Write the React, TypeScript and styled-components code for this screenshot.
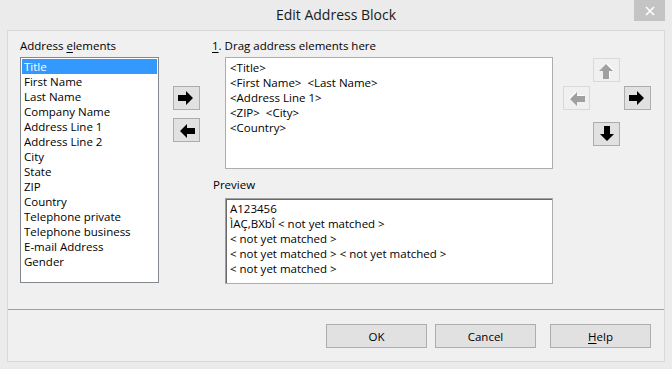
import React from 'react';
import styled, { createGlobalStyle } from 'styled-components';

const GlobalStyle = createGlobalStyle`
    html, body {
        margin: 0;
        padding: 0;
        background: #ebebeb;
    }
    * {
        box-sizing: border-box;
    }
`

const Window = styled.div`
    width: 672px;
    height: 369px;
    background: #ebebeb;
    display: flex;
    flex-direction: column;
    font-family: "Open Sans", "Noto Sans", sans-serif;
    font-size: 11.5px;
    color: #000;
`

const TitleBar = styled.div`
    height: 30px;
    display: grid;
    grid-template-columns: 1fr auto 1fr;
    align-items: start;
`

const Title = styled.div`
    grid-column: 2;
    font-size: 14px;
    line-height: 30px;
    color: #1a1a1a;
`

const CloseButton = styled.div`
    grid-column: 3;
    justify-self: end;
    margin-right: 7px;
    width: 31px;
    height: 21px;
    background: #c4c4c4;
    display: flex;
    align-items: center;
    justify-content: center;
`

const Client = styled.div`
    margin: 0 7px 7px 7px;
    flex: 1;
    border: 1px solid #d9d9d9;
    background: #f0f0f0;
    display: flex;
    flex-direction: column;
`

const Main = styled.div`
    height: 279px;
    border-bottom: 1px solid #a0a0a0;
    display: flex;
    padding: 7px 12px 0 12px;
`

const Column = styled.div<{ $width?: number }>`
    display: flex;
    flex-direction: column;
    width: ${p => (p.$width ? `${p.$width}px` : 'auto')};
`

const Label = styled.div<{ $indent?: number }>`
    height: 16px;
    line-height: 16px;
    margin-bottom: 3px;
    margin-left: ${p => p.$indent || 0}px;
    white-space: nowrap;
`

const Key = styled.span`
    text-decoration: underline;
    text-underline-offset: 2px;
`

const ListBox = styled.div`
    height: 226px;
    background: #fff;
    border: 1px solid #828790;
    padding: 1px;
`

const ListItem = styled.div<{ $selected?: boolean }>`
    height: 15px;
    line-height: 15px;
    padding-left: 2px;
    white-space: nowrap;
    background: ${p => (p.$selected ? '#3399ff' : 'transparent')};
    color: ${p => (p.$selected ? '#fff' : '#000')};
`

const MoveColumn = styled.div`
    display: flex;
    flex-direction: column;
    gap: 8px;
    margin: 48px 12px 0 14px;
`

const ArrowButton = styled.div<{ $disabled?: boolean }>`
    width: 27px;
    height: 24px;
    background: ${p => (p.$disabled ? '#f0f0f0' : '#e1e1e1')};
    border: 1px solid ${p => (p.$disabled ? '#d9d9d9' : '#adadad')};
    display: flex;
    align-items: center;
    justify-content: center;
`

const TextBox = styled.div<{ $height: number; $sunken?: boolean }>`
    margin-left: 13px;
    width: 328px;
    height: ${p => p.$height}px;
    background: #fff;
    border: 1px solid #abadb3;
    border-top-color: ${p => (p.$sunken ? '#a0a0a0' : '#abadb3')};
    border-left-color: ${p => (p.$sunken ? '#a0a0a0' : '#abadb3')};
    box-shadow: ${p => (p.$sunken ? 'inset 1px 1px 0 #696969' : 'none')};
    padding: 2px 4px;
`

const Line = styled.div`
    height: 15px;
    line-height: 15px;
    white-space: pre;
`

const SectionGap = styled.div`
    height: 8px;
`

const PreviewLabel = styled(Label)`
    margin-bottom: 5px;
    margin-left: 1px;
`

const Cluster = styled.div`
    display: grid;
    grid-template-columns: 27px 27px 27px;
    grid-template-rows: 24px 24px 36px;
    column-gap: 3px;
    row-gap: 4px;
    margin: 20px 0 0 10px;
    align-items: start;
`

const Cell = styled.div<{ $col: number; $row: number; $offset?: number }>`
    grid-column: ${p => p.$col};
    grid-row: ${p => p.$row};
    margin-top: ${p => p.$offset || 0}px;
    margin-left: ${p => (p.$col === 3 ? 1 : 0)}px;
`

const Footer = styled.div`
    flex: 1;
    display: flex;
    justify-content: flex-end;
    align-items: flex-start;
    padding: 14px 13px 0 0;
    gap: 8px;
`

const DialogButton = styled.div<{ $gapBefore?: number }>`
    width: 101px;
    height: 24px;
    background: #e1e1e1;
    border: 1px solid #adadad;
    display: flex;
    align-items: center;
    justify-content: center;
    margin-left: ${p => p.$gapBefore || 0}px;
`

type Dir = 'left' | 'right' | 'up' | 'down';

const arrowRotation: Record<Dir, number> = { right: 0, down: 90, left: 180, up: 270 };

const Arrow = ({ dir, disabled }: { dir: Dir; disabled?: boolean }) => (
    <svg width="17" height="15" viewBox="0 0 17 15" style={{ transform: `rotate(${arrowRotation[dir]}deg)` }}>
        {disabled && <polygon points="1,5 9,5 9,1 16,8 9,15 9,11 1,11" fill="#fff" />}
        <polygon points="0,4 8,4 8,0 15,7 8,14 8,10 0,10" fill={disabled ? '#a0a0a0' : '#000'} />
    </svg>
);

const elements = [
    'Title', 'First Name', 'Last Name', 'Company Name', 'Address Line 1', 'Address Line 2',
    'City', 'State', 'ZIP', 'Country', 'Telephone private', 'Telephone business',
    'E-mail Address', 'Gender',
];

const blockLines = ['<Title>', '<First Name>  <Last Name>', '<Address Line 1>', '<ZIP>  <City>', '<Country>'];

const previewLines = [
    'A123456',
    'ÌAÇ,BXbÎ < not yet matched >',
    '< not yet matched >',
    '< not yet matched > < not yet matched >',
    '< not yet matched >',
];

export default function App() {
    return (
        <>
            <GlobalStyle />
            <Window>
                <TitleBar>
                    <Title>Edit Address Block</Title>
                    <CloseButton>
                        <svg width="10" height="10" viewBox="0 0 10 10">
                            <path d="M1 1 L9 9 M9 1 L1 9" stroke="#fff" strokeWidth="1.6" />
                        </svg>
                    </CloseButton>
                </TitleBar>
                <Client>
                    <Main>
                        <Column $width={139}>
                            <Label>Address <Key>e</Key>lements</Label>
                            <ListBox>
                                {elements.map((e, i) => (
                                    <ListItem key={e} $selected={i === 0}>{e}</ListItem>
                                ))}
                            </ListBox>
                        </Column>
                        <MoveColumn>
                            <ArrowButton><Arrow dir="right" /></ArrowButton>
                            <ArrowButton><Arrow dir="left" /></ArrowButton>
                        </MoveColumn>
                        <Column>
                            <Label><Key>1</Key>. Drag address elements here</Label>
                            <TextBox $height={112}>
                                {blockLines.map((l, i) => <Line key={i}>{l}</Line>)}
                            </TextBox>
                            <SectionGap />
                            <PreviewLabel>Preview</PreviewLabel>
                            <TextBox $height={86} $sunken>
                                {previewLines.map((l, i) => <Line key={i}>{l}</Line>)}
                            </TextBox>
                        </Column>
                        <Cluster>
                            <Cell $col={2} $row={1}><ArrowButton $disabled><Arrow dir="up" disabled /></ArrowButton></Cell>
                            <Cell $col={1} $row={2}><ArrowButton $disabled><Arrow dir="left" disabled /></ArrowButton></Cell>
                            <Cell $col={3} $row={2}><ArrowButton><Arrow dir="right" /></ArrowButton></Cell>
                            <Cell $col={2} $row={3} $offset={8}><ArrowButton><Arrow dir="down" /></ArrowButton></Cell>
                        </Cluster>
                    </Main>
                    <Footer>
                        <DialogButton>OK</DialogButton>
                        <DialogButton>Cancel</DialogButton>
                        <DialogButton $gapBefore={6}><span><Key>H</Key>elp</span></DialogButton>
                    </Footer>
                </Client>
            </Window>
        </>
    );
}
